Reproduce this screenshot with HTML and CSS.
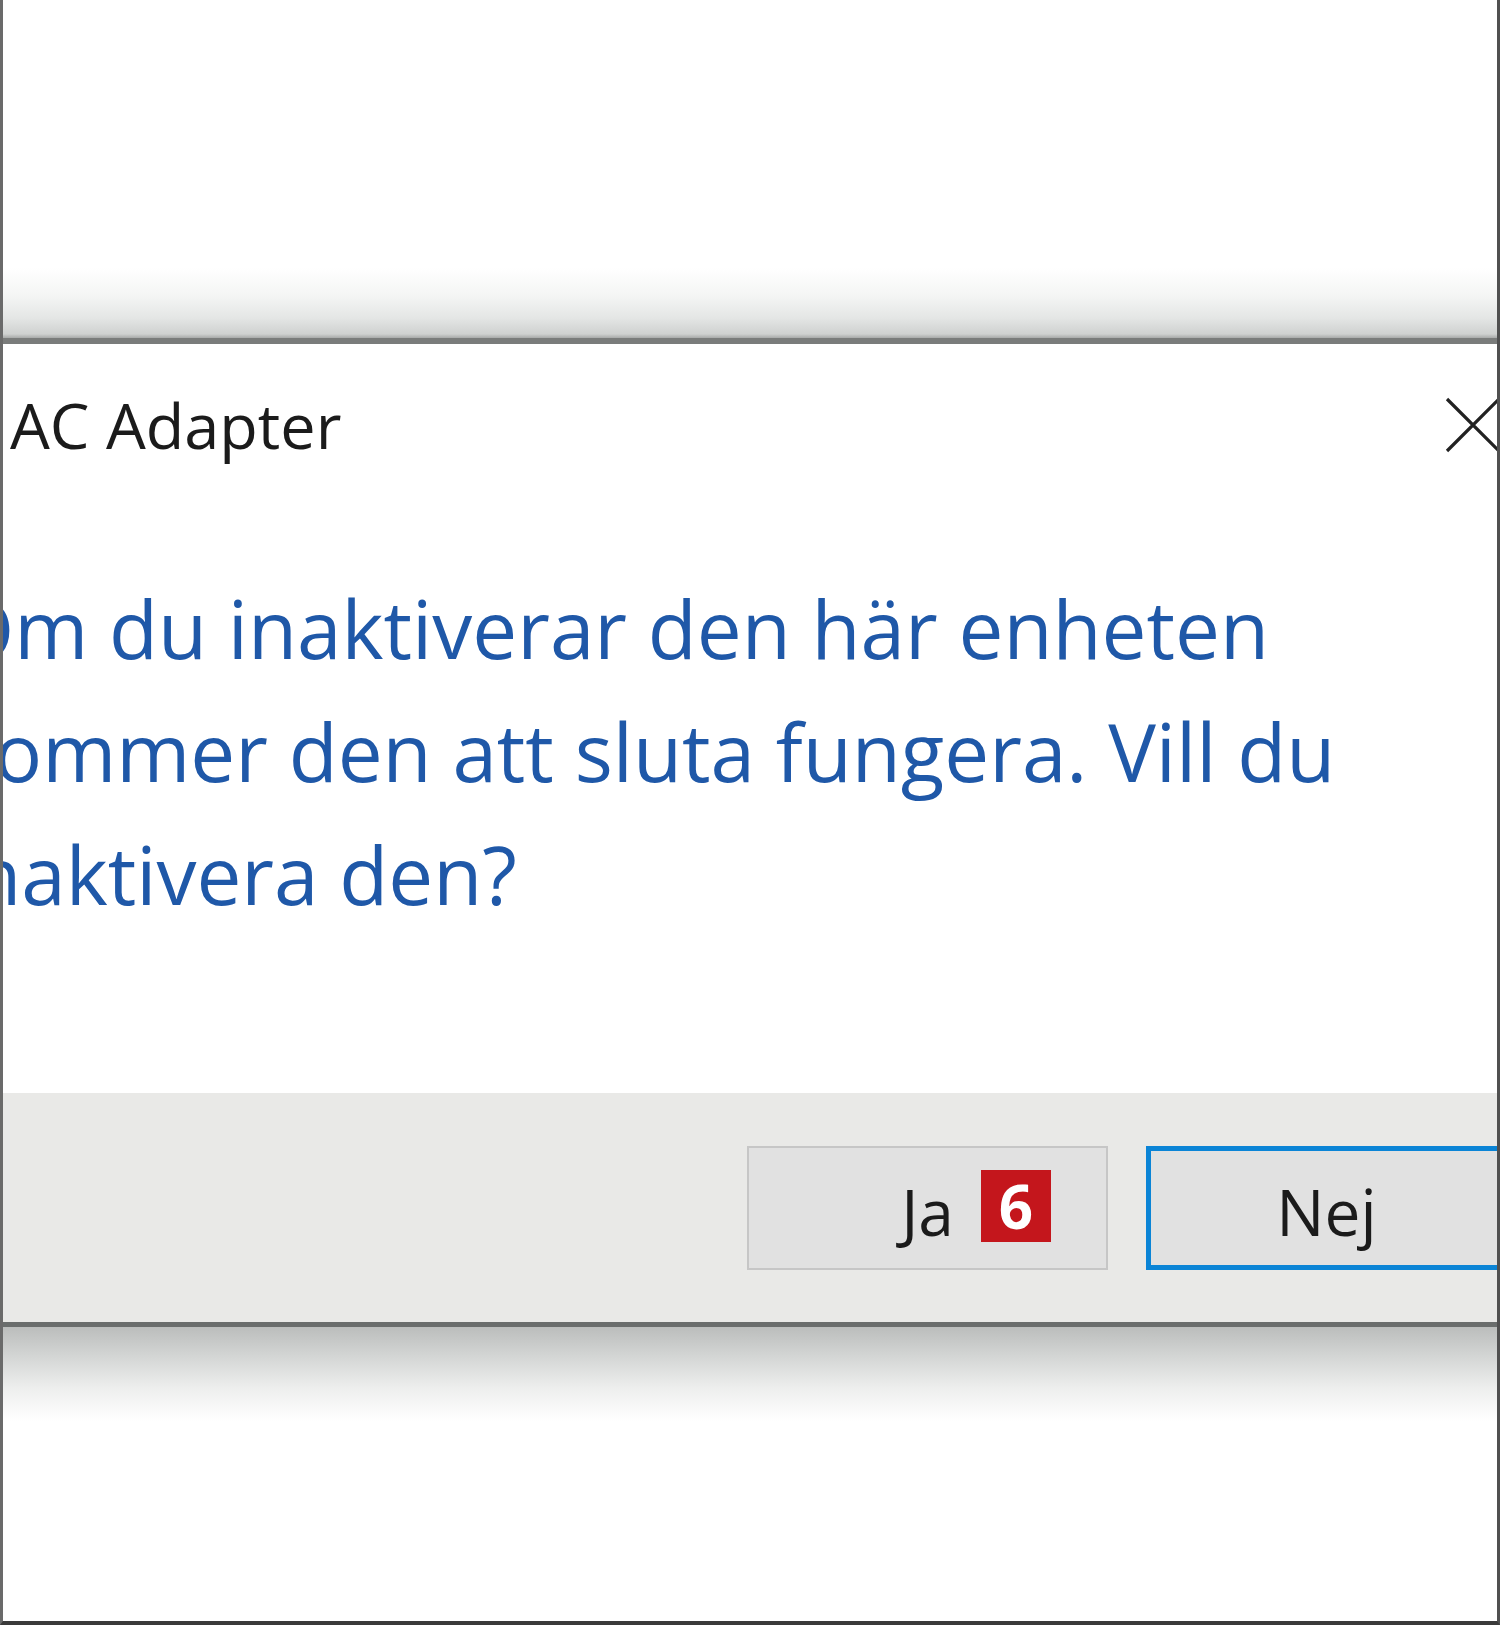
FILE: index.html
```html
<!DOCTYPE html>
<html lang="sv">
<head>
  <meta charset="UTF-8">
  <meta name="viewport" content="width=device-width, initial-scale=1.0">
  <title>AC Adapter</title>
  <link rel="stylesheet" href="styles.css">
</head>
<body>

  <div class="screen">
    <div class="shade shade-top"></div>

    <div class="dialog">
      <div class="dialog-main">
        <div class="dialog-header">
          <span class="dialog-title">AC Adapter</span>
          <svg class="close-icon" width="56" height="56" viewBox="0 0 56 56">
            <path d="M2 2 L54 54 M54 2 L2 54" stroke="#222" stroke-width="3.2" fill="none"/>
          </svg>
        </div>
        <p class="dialog-message">Om du inaktiverar den här enheten<br>kommer den att sluta fungera. Vill du<br>inaktivera den?</p>
      </div>

      <div class="dialog-footer">
        <button class="btn">Ja<span class="badge">6</span></button>
        <button class="btn btn-default">Nej</button>
      </div>
    </div>

    <div class="shade shade-bottom"></div>
  </div>

</body>
</html>
```

FILE: styles.css
```css
/* Zoomed crop of a Windows confirm dialog */
body {
  margin: 0;
  background-color: #fff;
  font-family: "Open Sans", "Noto Sans", sans-serif;
  overflow: hidden;
}

.screen {
  width: 1494px;
  height: 1621px;
  border-left: 3px solid #6a6a6a;
  border-right: 3px solid #505050;
  border-bottom: 4px solid #3a3a3a;
  background-color: #fff;
  overflow: hidden;
  display: flex;
  flex-direction: column;
}

.shade-top {
  height: 338px;
  flex-shrink: 0;
  background: linear-gradient(to bottom, #fff 0, #fff 268px, #f4f5f4 296px, #e4e6e5 318px, #cfd1d0 334px, #a8aaa9 338px);
}

.shade-bottom {
  height: 94px;
  flex-shrink: 0;
  background: linear-gradient(to bottom, #bbbdbc 0, #d4d6d5 30px, #eeefee 62px, #fff 94px);
}

.dialog {
  flex-shrink: 0;
  border-top: 6px solid #7a7c7b;
  border-bottom: 5px solid #6a6d6c;
}

.dialog-main {
  height: 749px;
  box-sizing: border-box;
  background-color: #fff;
}

.dialog-header {
  display: flex;
  justify-content: space-between;
  align-items: center;
  padding: 36px 0 0 7px;
  margin-right: -4px;
}

.dialog-title {
  font-size: 63px;
  color: #1b1b1b;
  line-height: 90px;
}

.close-icon {
  display: block;
}

.dialog-message {
  margin: 96px 0 0 -51px;
  font-size: 80px;
  line-height: 123px;
  color: #1f58a8;
  white-space: nowrap;
}

.dialog-footer {
  height: 229px;
  box-sizing: border-box;
  background-color: #e9e9e7;
  display: flex;
  align-items: center;
  gap: 38px;
  padding-left: 744px;
}

.btn {
  position: relative;
  flex-shrink: 0;
  width: 361px;
  height: 124px;
  box-sizing: border-box;
  background-color: #e1e1e1;
  border: 2px solid #c6c6c6;
  font-family: inherit;
  font-size: 64px;
  color: #1b1b1b;
  padding: 8px 0 0;
}

.btn-default {
  border: 5px solid #0a84d6;
}

.badge {
  position: absolute;
  left: 232px;
  top: 22px;
  width: 70px;
  height: 72px;
  background-color: #c4161c;
  color: #fff;
  font-size: 60px;
  font-weight: bold;
  line-height: 72px;
  text-align: center;
}
```
